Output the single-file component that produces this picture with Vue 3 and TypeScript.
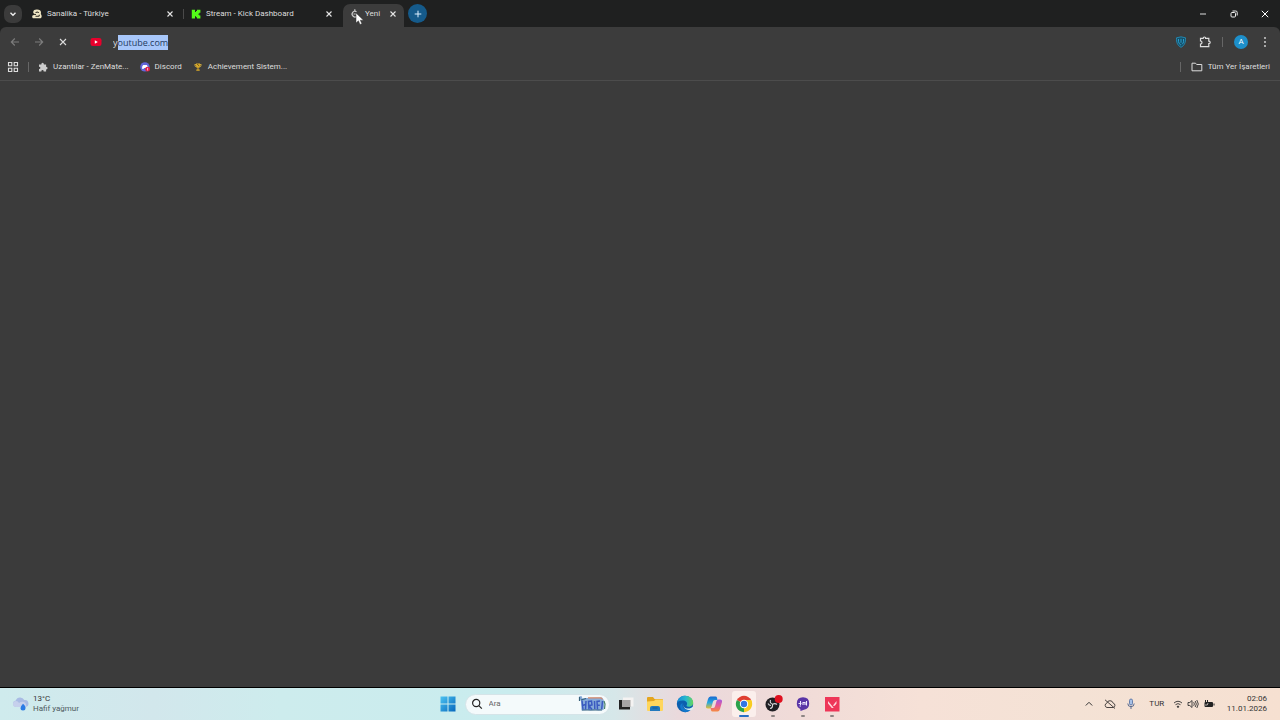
<script setup lang="ts">
import { onMounted, ref } from 'vue'

interface Tab {
  id: string
  title: string
  active: boolean
}

const tabs: Tab[] = [
  { id: 'sanalika', title: 'Sanalika - Türkiye', active: false },
  { id: 'kick', title: 'Stream - Kick Dashboard', active: false },
  { id: 'new', title: 'Yeni', active: true },
]

const bookmarks = [
  { id: 'ext', title: 'Uzantılar - ZenMate...' },
  { id: 'discord', title: 'Discord' },
  { id: 'trophy', title: 'Achievement Sistem...' },
]

const address = ref('youtube.com')
const addressInput = ref<HTMLInputElement | null>(null)

// The completed part of the address stays selected behind the typed letter.
onMounted(() => {
  addressInput.value?.focus()
  addressInput.value?.setSelectionRange(1, address.value.length)
})
</script>

<template>
  <div class="screen">
    <header class="strip">
      <button class="tab-search" aria-label="Sekme ara">
        <svg width="10" height="10" viewBox="0 0 10 10"><path d="M2.5 3.8 5 6.3 7.500 3.8" fill="none" stroke="#eee" stroke-width="1.400" /></svg>
      </button>
      <div class="tabs" role="tablist">
        <div v-for="t in tabs" :key="t.id" class="tab" :class="{ active: t.active }">
          <svg v-if="t.id === 'sanalika'" class="fav" viewBox="0 0 10 10">
            <path d="M1.200 3.600C1 1 3 .3 5 .4c2.600 0 4 1.200 4 3.200L8.800 5C10 6 10 9 8.500 9.300H1.500C0 9.200-.2 7 .8 6.200L2.500 6z" fill="#efe6c4" />
            <path d="M3.800 4C4 2.600 6.400 2.600 6.600 4M1 5.300l3 .2M3.500 7.200h3.200q1-.4.300-1.400" fill="none" stroke="#2c2920" stroke-width="1.100" />
          </svg>
          <svg v-else-if="t.id === 'kick'" class="fav" viewBox="0 0 10 10">
            <path d="M.8.8h3.200v2.200h1V2h1V.8h3.400v3H8.300v1H7.200v.8h1.100v1h1.100v2.800H6V8.300H5v-1H4v2.100H.8z" fill="#53fc18" />
          </svg>
          <svg v-else class="fav" viewBox="0 0 10 10">
            <path d="M6.500 2.800A2.800 2.800 0 1 0 7 7M3.500 5h3M4.800.3v1.600" fill="none" stroke="#c9c9c9" stroke-width="1.200" />
          </svg>
          <button class="title" role="tab" :aria-selected="t.active">{{ t.title }}</button>
          <button class="close" aria-label="Sekmeyi kapat">
            <svg width="8" height="8" viewBox="0 0 8 8"><path d="m1.500 1.500 5 5m0-5-5 5" stroke="#e6e6e6" stroke-width="1.100" /></svg>
          </button>
        </div>
        <svg class="pointer" width="10" height="14" viewBox="0 0 10 14">
          <path d="M1 1v10l2.400-2.200L5 12.500l1.900-.8-1.600-3.500h3.200z" fill="#fff" stroke="#333" stroke-width=".5" />
        </svg>
      </div>
      <button class="new-tab" aria-label="Yeni sekme">
        <svg width="10" height="10" viewBox="0 0 10 10"><path d="M5 1.700v6.600M1.700 5h6.600" stroke="#dcefff" stroke-width="1" /></svg>
      </button>
      <div class="window-buttons">
        <button aria-label="Küçült"><svg width="10" height="10" viewBox="0 0 10 10"><path d="M2 5h6" stroke="#ddd" /></svg></button>
        <button aria-label="Önceki boyut"><svg width="10" height="10" viewBox="0 0 10 10"><rect x="2" y="3.500" width="4.500" height="4.500" rx="1" fill="none" stroke="#eee" /><path d="M3.500 2h3.300q1.400 0 1.400 1.400v3.100" fill="none" stroke="#eee" /></svg></button>
        <button aria-label="Kapat"><svg width="10" height="10" viewBox="0 0 10 10"><path d="m1.800 1.800 6.400 6.400m0-6.400-6.400 6.400" stroke="#fff" /></svg></button>
      </div>
    </header>

    <div class="chrome">
      <div class="toolbar">
        <button class="tool" aria-label="Geri"><svg width="10" height="10" viewBox="0 0 10 10"><path d="M9 5H1.300M4.800 1.500 1.300 5l3.500 3.500" fill="none" stroke="#7d7d7d" stroke-width="1.100" /></svg></button>
        <button class="tool" aria-label="İleri"><svg width="10" height="10" viewBox="0 0 10 10"><path d="M1 5h7.700M5.200 1.500 8.700 5 5.200 8.500" fill="none" stroke="#7d7d7d" stroke-width="1.100" /></svg></button>
        <button class="tool" aria-label="Durdur"><svg width="10" height="10" viewBox="0 0 10 10"><path d="m2 2 6 6m0-6-6 6" stroke="#ddd" stroke-width="1.100" /></svg></button>
        <label class="address">
          <svg width="12" height="10" viewBox="0 0 12 10"><rect x=".5" y="1" width="11" height="8" rx="2.200" fill="#e8002c" /><path d="M4.800 3.300v3.400L7.800 5z" fill="#fff" /></svg>
          <input ref="addressInput" v-model="address" type="text" aria-label="Adres" spellcheck="false" />
        </label>
        <div class="tools-right">
          <button class="tool" aria-label="ZenMate">
            <svg width="12" height="12" viewBox="0 0 12 12"><path d="M1.500 1.800 6 .8l4.500 1C10.700 6.500 9.500 9.500 6 11.300 2.500 9.500 1.300 6.500 1.500 1.800z" fill="#15506a" stroke="#2397c4" stroke-width=".8" /><path d="M3.500 3v2.500q0 2 2.500 3.800M6 2.800v4M8.500 3v2.500q0 1.800-1.500 2.800" fill="none" stroke="#2ba5d5" stroke-width=".9" /></svg>
          </button>
          <button class="tool" aria-label="Uzantılar">
            <svg width="12" height="12" viewBox="0 0 12 12"><path d="M1.500 2.300h2.700q0-1.300 1.200-1.300t1.200 1.300h3.200v2.900q1.400 0 1.400 1.200T9.800 7.600v3H1.500V8.100q1.500-.2 1.500-1.600T1.500 4.900z" fill="none" stroke="#ddd" stroke-width="1.200" /></svg>
          </button>
          <span class="rule"></span>
          <button class="avatar" aria-label="Profil">A</button>
          <button class="tool" aria-label="Menü">
            <svg width="10" height="12" viewBox="0 0 10 12" fill="#ddd"><circle cx="5" cy="2" r=".9" /><circle cx="5" cy="6" r=".9" /><circle cx="5" cy="10" r=".9" /></svg>
          </button>
        </div>
      </div>

      <nav class="bookmarks" aria-label="Yer işaretleri">
        <button class="apps" aria-label="Uygulamalar">
          <svg width="12" height="12" viewBox="0 0 12 12" fill="none" stroke="#ddd" stroke-width="1.100"><path d="M1.500 1.500h3.300v3.300H1.500zM7.200 1.500h3.300v3.300H7.200zM1.500 7.200h3.300v3.300H1.500zM7.200 7.200h3.300v3.300H7.200z" /></svg>
        </button>
        <span class="rule"></span>
        <a v-for="b in bookmarks" :key="b.id" href="#">
          <svg v-if="b.id === 'ext'" class="fav" viewBox="0 0 10 10"><path d="M1 2.500h2.300Q3.300.8 4.600.8t1.300 1.700h2.200v2.200q1.500.1 1.500 1.400T8.100 7.500v2H5.700Q5.600 8.100 4.500 8.100T3.300 9.500H1V7.100q1.400-.1 1.400-1.200T1 4.800z" fill="#ccc" /></svg>
          <svg v-else-if="b.id === 'discord'" class="fav" viewBox="0 0 10 10"><circle cx="4.900" cy="4.900" r="4.700" fill="#6265d8" /><path d="M2 6.800Q2 3.500 3.200 3.100h3.600Q8 4.300 8 6.800L6.500 7 6 6H4l-.5 1z" fill="#fff" /><circle cx="7.600" cy="7.200" r="2.400" fill="#e31d45" /><path d="M7.600 5.900v2.600" stroke="#fff" stroke-width=".7" /></svg>
          <svg v-else class="fav" viewBox="0 0 10 10"><path d="M3 1.500h4v2.300Q7 6 5 6T3 3.800zM4.500 5.500h1v2h1.200v1.200H3.300V7.500h1.200z" fill="#d9a928" /><path d="M3 2.500H1.800q0 2.300 1.700 2.500M7 2.500h1.200Q8.200 4.800 6.500 5" fill="none" stroke="#e6bc3d" stroke-width=".8" /><path d="m4.300 2 1.500 1.800" stroke="#4a3a13" stroke-width=".8" /></svg>
          <span>{{ b.title }}</span>
        </a>
        <div class="all">
          <span class="rule"></span>
          <button>
            <svg width="12" height="10" viewBox="0 0 12 10"><path d="M1 1.200h3.500l1.200 1.300h5.100v6.300H1z" fill="none" stroke="#ddd" stroke-width="1" /></svg>
            <span>Tüm Yer İşaretleri</span>
          </button>
        </div>
      </nav>
    </div>

    <main class="page"></main>

    <footer class="taskbar">
      <button class="weather">
        <svg width="18" height="18" viewBox="0 0 18 18"><path d="M4 12a3.300 3.300 0 0 1-.2-6.500A4.600 4.600 0 0 1 12.300 5 3.500 3.500 0 0 1 13.500 12z" fill="#a9bbe4" /><path d="M4 12a3 3 0 0 1 0-6q2.200 0 3 2 2.500-2 5-1 2.500 1 2.200 5z" fill="#c6d0ec" /><path d="M11 8.800q3 2.800 2.500 4.200a2.500 2.500 0 0 1-5 0Q8.500 11.500 11 8.800z" fill="#2b7be4" /></svg>
        <span class="weather-text"><span>13°C</span><span class="desc">Hafif yağmur</span></span>
      </button>

      <div class="center">
        <button class="app" aria-label="Başlat">
          <svg width="16" height="16" viewBox="0 0 16 16"><defs><linearGradient id="win" x2="1" y2="1"><stop stop-color="#4cc2f1" /><stop offset="1" stop-color="#0668bd" /></linearGradient></defs><path d="M.5.500h7v7h-7zM8.500.500h7v7h-7zM.5 8.500h7v7h-7zM8.500 8.500h7v7h-7z" fill="url(#win)" /></svg>
        </button>
        <label class="search">
          <svg width="12" height="12" viewBox="0 0 12 12"><circle cx="5.200" cy="5" r="3.600" fill="none" stroke="#222" stroke-width="1.200" /><path d="m7.800 7.700 3 3" stroke="#222" stroke-width="1.200" /></svg>
          <input type="search" placeholder="Ara" aria-label="Ara" />
          <svg width="28" height="18" viewBox="0 0 28 18">
            <path d="M1 1.500l2.500-.5 1 2.500 3.500-.5 16-.5 1.500 2 1 3-1 7.500-5 .5-3-.5-5 .5-3-.5-6 .5-.5-9z" fill="#86abd9" />
            <path d="M1.500 2v4M3 5l5-1.500M4 15h20" stroke="#36627c" stroke-width="1.200" />
            <path d="M10 2.800h13l1.500 1.500" fill="none" stroke="#d98a68" stroke-width="1.200" />
            <path d="M4 5.500l1 9M8 6l-.5 8.500M4.500 10.500l3-1M11 14.500l-.5-8 3-.5.5 4-3 .8 3 3.700M16.500 6l.3 8M19.500 14.500l-.5-8 3-.5M19.300 10.300h2.500M24.500 6l-.8 8" fill="none" stroke="#3a5ac0" stroke-width="1.500" />
            <path d="M26 6l1 3-.5 5" fill="none" stroke="#4c8468" stroke-width="1.200" />
          </svg>
        </label>
        <div class="apps-row">
          <button class="app" aria-label="Görev görünümü">
            <svg width="18" height="18" viewBox="0 0 18 18"><path d="M6 2.500h10.500v9H6z" fill="#f5f3f2" /><path d="M2 5h11v9.500H2z" fill="#222" /><path d="M5 5h8.500v7H5z" fill="#a7a5a5" /></svg>
          </button>
          <button class="app" aria-label="Dosya Gezgini">
            <svg width="18" height="18" viewBox="0 0 18 18"><path d="M1 3q0-1 1-1h5l1.500 2H16q1 0 1 1v10H1z" fill="#e4a51f" /><path d="M1 6.500 8 6l1.500-1.500H16q1 0 1 1V15q0 1-1 1H2q-1 0-1-1z" fill="#ffd65c" /><path d="M4 16v-3q0-2 2-2h6q2 0 2 2v3z" fill="#2179bd" /><path d="M6.500 13h5" stroke="#195a91" /></svg>
          </button>
          <button class="app" aria-label="Edge">
            <svg width="18" height="18" viewBox="0 0 18 18"><defs><linearGradient id="edge" x2="1"><stop stop-color="#1689d8" /><stop offset=".55" stop-color="#27b8ce" /><stop offset="1" stop-color="#66d65b" /></linearGradient></defs><circle cx="9" cy="9" r="8.200" fill="#0c5fae" /><path d="M1 8C2 3 5 .8 9 .8c5 0 8.200 3.200 8.200 6.700 0 3-2.200 4.200-4.700 4.200-2 0-2.300-.9-1.700-1.600C12 7.500 9.500 5.500 6.500 5.600 3.500 5.700 1.500 7 1 8z" fill="url(#edge)" /><path d="M6.800 8.200C5.500 11 8 15 12 14.500q2.200-.3 3.700-1.200l.8-.5C15 15.500 12 17.200 9.500 17.200 6 16.500 3.500 13 4.300 10.300 4.800 8.900 5.800 8.300 6.800 8.200z" fill="#1478cc" /><path d="M7.600 8.500c-.8 3 1.200 5 4.400 5 2.200 0 3.600-.8 4.600-1.600l.9 1L16 15c-4 1-10-1.500-8.400-6.500z" fill="#d9eff5" /></svg>
          </button>
          <button class="app" aria-label="Copilot">
            <svg width="18" height="18" viewBox="0 0 18 18"><defs><linearGradient id="cpa" x2="0" y2="1"><stop stop-color="#1969d1" /><stop offset=".5" stop-color="#26a9df" /><stop offset="1" stop-color="#e7bd35" /></linearGradient><linearGradient id="cpb" x2="0" y2="1"><stop stop-color="#a05be2" /><stop offset=".5" stop-color="#e45b99" /><stop offset="1" stop-color="#f68b40" /></linearGradient></defs><path d="M5.500 1.500h5q1.200 0 1.500 1.300L12.500 5H10Q8.500 5 8 6.500L6.500 12Q6 13.500 4.500 13.500H3Q.5 13.500 1 11l2-7Q3.700 1.500 5.500 1.500z" fill="url(#cpa)" /><path d="M12.500 16.500h-5Q6.300 16.500 6 15.200L5.500 13H8q1.500 0 2-1.500L11.500 6Q12 4.500 13.500 4.500H15q2.500 0 2 2.500l-2 7q-.7 2.500-2.500 2.500z" fill="url(#cpb)" /></svg>
          </button>
          <button class="app current" aria-label="Chrome">
            <svg width="18" height="18" viewBox="0 0 18 18"><path d="M9 9 1.900 4.900A8.200 8.200 0 0 1 16.100 4.900z" fill="#df3f31" /><path d="M9 9 16.100 4.900A8.200 8.200 0 0 1 9 17.200z" fill="#f8cc22" /><path d="M9 9V17.200A8.200 8.200 0 0 1 1.900 4.900z" fill="#2ba24c" /><path d="M9 5h7.100a8 8 0 0 1 1 3L12.500 11z" fill="#f8cc22" /><circle cx="9" cy="9" r="4.200" fill="#fff" /><circle cx="9" cy="9" r="3.200" fill="#3276e3" /></svg>
          </button>
          <button class="app running" aria-label="OBS Studio">
            <svg width="20" height="18" viewBox="0 0 20 18"><circle cx="9.500" cy="9.500" r="7" fill="#202024" /><path d="M7.500 5q-1 3 2 4.200Q12.300 8 14 9.500M9.500 9.200Q10 13 7 13.500M5 8.500q1 2 3 2" fill="none" stroke="#d4d4d7" stroke-width="1.100" /><circle cx="15.700" cy="4" r="4" fill="#df101f" /></svg>
          </button>
          <button class="app running" aria-label="Sohbet">
            <svg width="18" height="18" viewBox="0 0 18 18"><path d="M9 2.200q6.200 0 6.200 6.300Q15.200 14 10 14.700L6.500 16l-.2-2Q2.800 12.500 2.800 8.500 2.800 2.200 9 2.200z" fill="#5935a6" /><path d="M4.500 8.500h3M6.500 6v4M9 10V7.500h2V10M12.500 6v4.500M5.500 11h1.500" fill="none" stroke="#eee9ff" stroke-width="1.100" /></svg>
          </button>
          <button class="app running" aria-label="Valorant">
            <svg width="18" height="18" viewBox="0 0 18 18"><path d="M2 2h14.500v14.500H2z" fill="#ee3658" /><path d="M5 6v2.500l3.800 4.500h2zM13.500 6v2.500L11.800 10.700h-2z" fill="#ffd9de" /></svg>
          </button>
        </div>
      </div>

      <div class="tray">
        <button aria-label="Gizli simgeler"><svg width="10" height="10" viewBox="0 0 10 10"><path d="M1.800 6.500 5 3.300l3.200 3.200" fill="none" stroke="#333" /></svg></button>
        <button aria-label="OneDrive"><svg width="12" height="10" viewBox="0 0 12 10"><path d="M3 8.500a2.200 2.200 0 0 1-.2-4.300Q3.500 1.700 6 1.700t3.200 2.500a2.200 2.200 0 0 1 0 4.300z" fill="none" stroke="#4b4543" /><path d="m1 .8 10 8.700" stroke="#4b4543" /></svg></button>
        <button aria-label="Mikrofon"><svg width="10" height="12" viewBox="0 0 10 12"><rect x="3.500" y="1" width="3" height="6" rx="1.500" fill="#a7c0e6" stroke="#4b6a9f" stroke-width=".8" /><path d="M1.800 5.500q0 3.200 3.200 3.200t3.200-3.200M5 8.700V11" fill="none" stroke="#4b5f87" stroke-width=".9" /></svg></button>
        <button class="lang">TUR</button>
        <button class="status" aria-label="Ağ, ses, pil">
          <svg width="10" height="10" viewBox="0 0 10 10" fill="none" stroke="#333" stroke-width=".9"><path d="M1 4q4-3.500 8 0M2.500 5.700q2.500-2.200 5 0" /><circle cx="5" cy="7.700" r=".7" fill="#222" /></svg>
          <svg width="12" height="10" viewBox="0 0 12 10" fill="none" stroke="#333" stroke-width=".9"><path d="M1 3.500h1.800L5 1.500v7L2.800 6.500H1zM6.700 3.200q1.300 1.800 0 3.600M8.200 2q2.300 3 0 6M9.800 1q3 4 0 8" /></svg>
          <svg width="12" height="10" viewBox="0 0 12 10"><rect x="1.500" y="3" width="8.500" height="5" rx="1" fill="#222" /><path d="M11 4.500v2M2.500 1v2M4.500 1v2" stroke="#222" /><path d="M2 6q3 1 3-2" fill="none" stroke="#eee1dc" stroke-width=".7" /></svg>
        </button>
        <button class="clock"><span>02:06</span><span>11.01.2026</span></button>
      </div>
    </footer>
  </div>
</template>

<style>
html,
body {
  margin: 0;
  background: #3b3b3b;
}
</style>

<style scoped>
.screen {
  display: flex;
  flex-direction: column;
  min-height: 100vh;
  font: 8px/12px Roboto, "Noto Sans", sans-serif;
  color: #dedede;
  background: #1f2020;
}
button,
input {
  font: inherit;
  color: inherit;
  background: none;
  border: 0;
  padding: 0;
  margin: 0;
  outline: 0;
}
button {
  display: flex;
  align-items: center;
  justify-content: center;
  white-space: nowrap;
}
svg {
  display: block;
  flex: none;
}
.fav {
  width: 10px;
  height: 10px;
}
.strip {
  display: flex;
  align-items: center;
  height: 27px;
  padding-left: 4px;
}
.tab-search {
  width: 18px;
  height: 18px;
  border-radius: 7px;
  background: #3b3b3b;
}
.tabs {
  position: relative;
  display: flex;
  align-self: stretch;
  margin-left: 3px;
}
.tab {
  display: flex;
  align-items: center;
  gap: 5px;
  box-sizing: border-box;
  width: 159px;
  padding: 0 8px 0 7px;
}
.tab:first-child {
  background: linear-gradient(#4a4a4a, #4a4a4a) right center / 1px 10px no-repeat;
}
.tab .title {
  flex: 1;
  justify-content: flex-start;
}
.tab .close {
  width: 12px;
  height: 12px;
}
.tab.active {
  width: 61px;
  margin-top: 4px;
  padding: 0 5px 4px 7px;
  background: #3c3c3c;
  border-radius: 7px 7px 0 0;
}
.pointer {
  position: absolute;
  right: 39px;
  top: 12px;
}
.new-tab {
  width: 19px;
  height: 19px;
  margin-left: 4px;
  border-radius: 50%;
  background: #155a8a;
}
.window-buttons {
  display: flex;
  align-self: stretch;
  margin-left: auto;
}
.window-buttons button {
  width: 31px;
}
.chrome {
  background: #3c3c3c;
  border-radius: 6px 6px 0 0;
  border-bottom: 1px solid #4c4c4c;
}
.toolbar {
  display: flex;
  align-items: center;
  height: 30px;
  padding: 0 6px 0 3px;
}
.tool {
  width: 24px;
  height: 24px;
}
.address {
  display: flex;
  align-items: center;
  flex: 1;
  gap: 11px;
  margin-left: 15px;
}
.address input {
  flex: 1;
  height: 15px;
  font-family: "Open Sans", "Noto Sans", sans-serif;
  font-size: 9px;
  line-height: 15px;
}
.address input::selection {
  background: #a8c7fa;
  color: #243b5e;
}
.tools-right {
  display: flex;
  align-items: center;
}
.rule {
  width: 1px;
  height: 10px;
  background: #666;
}
.tools-right .rule {
  margin: 0 11px 0 5px;
}
.avatar {
  width: 14px;
  height: 14px;
  border-radius: 50%;
  background: #1d8fca;
  color: #fff;
}
.tools-right .avatar + .tool {
  width: 18px;
  margin-left: 8px;
}
.bookmarks {
  display: flex;
  align-items: center;
  height: 19px;
  padding: 0 10px 4px 7px;
}
.bookmarks .apps + .rule {
  margin: 0 9px 0 9px;
}
.bookmarks a {
  display: flex;
  align-items: center;
  gap: 5px;
  margin-right: 11px;
  color: inherit;
  text-decoration: none;
}
.all {
  display: flex;
  align-items: center;
  gap: 10px;
  margin-left: auto;
}
.all button {
  gap: 5px;
}
.page {
  flex: 1;
  background: #3b3b3b;
  border-bottom: 1px solid #000;
}
.taskbar {
  display: grid;
  grid-template-columns: 1fr auto 1fr;
  align-items: center;
  height: 32px;
  color: #333;
  background: linear-gradient(90deg, #cfebed 0%, #d2e7ec 12%, #cdeced 22%, #c9ecee 40%, #d6e7e9 48%, #ead9dc 53%, #f0dbd8 62%, #f6e1d7 72%, #f4e2d5 84%, #f6e0d1 100%);
}
.weather {
  justify-self: start;
  gap: 3px;
  padding-left: 12px;
}
.weather-text,
.clock {
  display: flex;
  flex-direction: column;
  line-height: 10px;
}
.weather-text {
  align-items: flex-start;
}
.desc {
  color: #4f5a60;
}
.center {
  display: flex;
  align-items: center;
}
.app {
  position: relative;
  width: 24px;
  height: 26px;
}
.search {
  display: flex;
  align-items: center;
  box-sizing: border-box;
  width: 145px;
  height: 21px;
  margin: 0 4px 0 5px;
  padding: 0 3px 0 5px;
  border: 1px solid #d5e4e8;
  border-radius: 11px;
  background: #f4fafb;
}
.search input {
  flex: 1;
  min-width: 0;
  padding-left: 6px;
  appearance: none;
}
.search input::placeholder {
  color: #666;
  opacity: 1;
}
.apps-row {
  display: flex;
  justify-content: space-between;
  width: 231px;
}
.app.current {
  background: #fbefec;
  border-radius: 3px;
}
.app.current::after,
.app.running::after {
  content: "";
  position: absolute;
  bottom: 0;
  width: 4px;
  height: 2px;
  border-radius: 1px;
  background: #8d8583;
}
.app.current::after {
  width: 10px;
  background: #2a6fc4;
}
.tray {
  display: flex;
  align-items: center;
  justify-self: end;
  padding-right: 13px;
}
.tray button {
  width: 21px;
}
.tray .lang {
  width: 30px;
}
.tray .status {
  width: 44px;
  gap: 4px;
}
.tray .clock {
  width: auto;
  margin-left: 11px;
  align-items: flex-end;
}
</style>
